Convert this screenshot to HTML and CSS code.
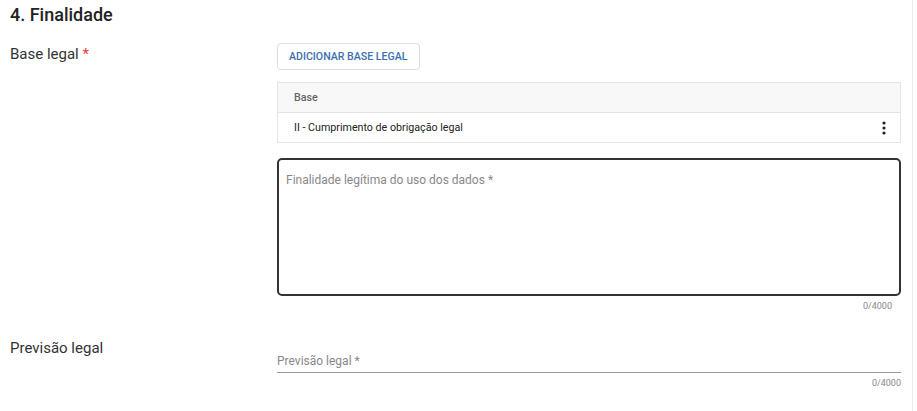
FILE: index.html
```html
<!DOCTYPE html>
<html lang="pt-BR">
<head>
    <meta charset="UTF-8">
    <meta name="viewport" content="width=device-width, initial-scale=1.0">
    <title>Finalidade</title>
    <link rel="stylesheet" href="styles.css">
</head>
<body>
    <div class="card">
        <h2 class="section-title">4. Finalidade</h2>

        <!-- Base legal -->
        <div class="row row-base">
            <div class="row-label">Base legal <span class="req">*</span></div>
            <div class="row-field">
                <button type="button" class="btn-outline">Adicionar base legal</button>
                <table class="base-table">
                    <thead>
                        <tr><th>Base</th><th class="col-actions"></th></tr>
                    </thead>
                    <tbody>
                        <tr>
                            <td>II - Cumprimento de obrigação legal</td>
                            <td class="col-actions">
                                <svg width="4" height="14" viewBox="0 0 4 14"><circle cx="2" cy="2" r="1.6" fill="#222"/><circle cx="2" cy="7" r="1.6" fill="#222"/><circle cx="2" cy="12" r="1.6" fill="#222"/></svg>
                            </td>
                        </tr>
                    </tbody>
                </table>
                <div class="textarea-box">
                    <textarea placeholder="Finalidade legítima do uso dos dados *"></textarea>
                </div>
                <div class="counter counter-inset">0/4000</div>
            </div>
        </div>

        <!-- Previsão legal -->
        <div class="row row-prev">
            <div class="row-label">Previsão legal</div>
            <div class="row-field">
                <input type="text" class="line-input" placeholder="Previsão legal *">
                <div class="counter">0/4000</div>
            </div>
        </div>
    </div>
</body>
</html>
```

FILE: styles.css
```css
body { margin: 0; font-family: Roboto, "Liberation Sans", Arial, sans-serif; color: #222; background: #fff; }
.card { width: 913px; height: 411px; border-right: 1px solid #ececec; padding: 0 11px 0 10px; box-sizing: border-box; }
.section-title { margin: 0; padding-top: 4px; font-size: 18px; font-weight: 500; line-height: 22px; color: #222; }

.row { display: flex; }
.row-label { width: 267px; flex-shrink: 0; font-size: 15px; line-height: 20px; color: #333; }
.row-field { flex: 1; }
.req { color: #e53935; }

.row-base { margin-top: 17px; }
.row-base .row-label { padding-top: 1px; }

.btn-outline { display: block; height: 27px; padding: 0 11px; font-family: inherit; font-size: 10.6px; font-weight: 500; text-transform: uppercase; color: #3a6fb0; background: #fff; border: 1px solid #ddd; border-radius: 4px; }

.base-table { width: 100%; margin-top: 12px; border-collapse: collapse; border: 1px solid #e4e4e4; font-size: 10.7px; }
.base-table th { height: 29px; padding: 0 16px; text-align: left; font-weight: 500; color: #666; background: #f8f8f8; border-bottom: 1px solid #e4e4e4; }
.base-table td { height: 29px; padding: 0 16px; color: #222; }
.base-table .col-actions { width: 14px; padding: 0 14px 0 0; text-align: right; }
.base-table svg { display: block; margin-left: auto; }

.textarea-box { margin-top: 15px; height: 138px; border: 2px solid #333; border-radius: 5px; box-sizing: border-box; }
.textarea-box textarea { width: 100%; height: 100%; box-sizing: border-box; border: none; outline: none; resize: none; background: transparent; padding: 13px 7px; font-family: inherit; font-size: 12px; }
textarea::placeholder, input::placeholder { color: #888; }

.counter { font-size: 9px; color: #888; text-align: right; margin-top: 5px; }
.counter-inset { padding-right: 9px; }

.row-prev { margin-top: 27px; }
.line-input { display: block; width: 100%; box-sizing: border-box; margin-top: 14px; padding: 2px 0 4px; border: none; border-bottom: 1px solid #999; outline: none; font-family: inherit; font-size: 12px; }
.row-prev .counter { margin-top: 5px; }
```
